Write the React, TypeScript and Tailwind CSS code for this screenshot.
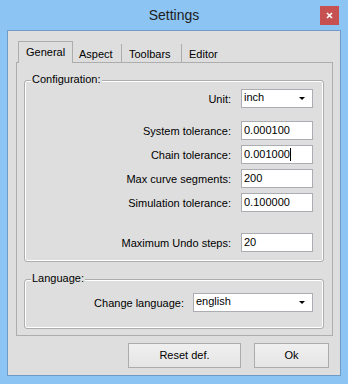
import React from "react";

function Field({ value, caret }: { value: string; caret?: boolean }) {
  return (
    <div className="w-[72px] h-[19px] border border-[#abadb3] bg-white pl-[2px] flex items-center text-[11px] leading-[13px] text-black">
      <span>{value}</span>
      {caret && <span className="w-px h-[13px] bg-black" />}
    </div>
  );
}

function Combo({ value, w }: { value: string; w: string }) {
  return (
    <div className={`${w} h-[19px] border border-[#abadb3] bg-white pl-[2px] pr-[7px] flex items-start justify-between text-[11px] leading-[13px] text-black`}>
      <span className="pt-px">{value}</span>
      <svg width="6" height="3" viewBox="0 0 6 3" className="mt-[7px]">
        <path d="M0 0h6L3 3z" fill="#000" />
      </svg>
    </div>
  );
}

function Row({ label, children, cls = "" }: { label: string; children: React.ReactNode; cls?: string }) {
  return (
    <div className={`flex items-center justify-end gap-[10px] ${cls}`}>
      <span className="text-[11px] leading-[13px] text-black pt-[2px]">{label}</span>
      {children}
    </div>
  );
}

export default function App() {
  return (
    <div className="w-[348px] h-[384px] bg-[#8cc4f3] flex flex-col font-['Liberation_Sans',Arial,sans-serif] select-none">
      <div className="h-[30px] relative flex items-center justify-center">
        <span className="text-[14px] text-[#1e1e1e] pt-px">Settings</span>
        <div className="absolute right-[9px] top-[6px] w-[19px] h-[19px] bg-[#c75050] flex items-center justify-center">
          <svg width="7" height="7" viewBox="0 0 7 7">
            <path d="M1 1l5 5M6 1l-5 5" stroke="#fff" strokeWidth="1.6" />
          </svg>
        </div>
      </div>
      <div className="ml-[7px] w-[334px] h-[346px] border border-[#6e9bc8] bg-[#dedede] flex flex-col">
        <div className="mt-[10px] h-[21px] pl-[10px] flex items-start text-[11px] leading-[13px] text-black">
          <div className="relative z-10 w-[55px] h-[22px] border-x border-t border-[#adadad] bg-[#dedede] pl-[7px] pt-[4px]">
            General
          </div>
          <div className="mt-[3px] h-[18px] w-[49px] border-r border-[#adadad] pl-[6px] pt-[4px]">Aspect</div>
          <div className="mt-[3px] h-[18px] w-[60px] border-r border-[#adadad] pl-[7px] pt-[4px]">Toolbars</div>
          <div className="mt-[3px] h-[18px] w-[46px] pl-[7px] pt-[4px]">Editor</div>
        </div>
        <div className="ml-[8px] w-[317px] h-[274px] border border-[#adadad] flex flex-col">
          <div className="relative mt-[17px] ml-[7px] w-[300px] rounded-[3px] border border-[#adadad] shadow-[inset_0_0_0_1px_#fff] pt-[8px] pr-[10px] pb-[9px] flex flex-col">
            <span className="absolute left-[6px] top-[-8px] px-px bg-[#dedede] text-[11px] leading-[13px] text-black">
              Configuration:
            </span>
            <Row label="Unit:">
              <Combo value="inch" w="w-[72px]" />
            </Row>
            <Row label="System tolerance:" cls="mt-[13px]">
              <Field value="0.000100" />
            </Row>
            <Row label="Chain tolerance:" cls="mt-[5px]">
              <Field value="0.001000" caret />
            </Row>
            <Row label="Max curve segments:" cls="mt-[5px]">
              <Field value="200" />
            </Row>
            <Row label="Simulation tolerance:" cls="mt-[5px]">
              <Field value="0.100000" />
            </Row>
            <Row label="Maximum Undo steps:" cls="mt-[21px]">
              <Field value="20" />
            </Row>
          </div>
          <div className="relative mt-[17px] ml-[7px] w-[300px] h-[50px] rounded-[3px] border border-[#adadad] shadow-[inset_0_0_0_1px_#fff] pt-[13px] pr-[10px] flex flex-col">
            <span className="absolute left-[6px] top-[-8px] px-px bg-[#dedede] text-[11px] leading-[13px] text-black">
              Language:
            </span>
            <div className="flex items-center justify-end gap-[9px]">
              <span className="text-[11px] leading-[13px] text-black pt-[2px]">Change language:</span>
              <Combo value="english" w="w-[120px]" />
            </div>
          </div>
        </div>
        <div className="mt-[7px] pr-[11px] flex justify-end gap-[13px]">
          <button className="w-[113px] h-[25px] border border-[#acacac] bg-gradient-to-b from-[#f0f0f0] to-[#e5e5e5] text-[11px] text-black">
            Reset def.
          </button>
          <button className="w-[75px] h-[25px] border border-[#acacac] bg-gradient-to-b from-[#f0f0f0] to-[#e5e5e5] text-[11px] text-black">
            Ok
          </button>
        </div>
      </div>
    </div>
  );
}
